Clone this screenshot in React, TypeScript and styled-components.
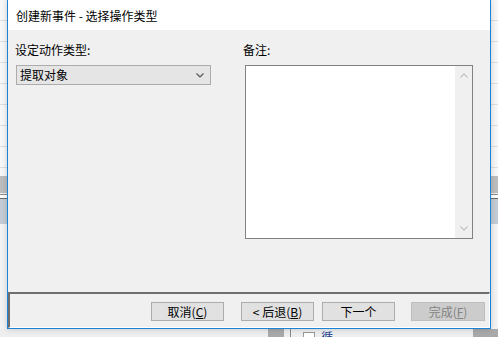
import React from "react";
import styled, { createGlobalStyle } from "styled-components";

const Global = createGlobalStyle`
  html, body { margin: 0; padding: 0; }
  body {
    width: 498px; height: 337px; overflow: hidden;
    font-family: "Noto Sans CJK SC", "Microsoft YaHei", sans-serif;
    font-size: 12px; color: #000;
  }
`;

const Desktop = styled.div`
  position: relative;
  width: 498px;
  height: 337px;
  display: flex;
  flex-direction: column;
  background: #f2f2f2;
  overflow: hidden;
`;

const BgRows = styled.div`
  height: 176px;
  background: repeating-linear-gradient(
    to bottom,
    #f7f7f7 0px,
    #f7f7f7 20px,
    #dedede 20px,
    #dedede 21px
  );
`;

const BgBand = styled.div<{ $h: number; $c: string }>`
  height: ${(p) => p.$h}px;
  background: ${(p) => p.$c};
`;

const BgRest = styled.div`
  flex: 1;
  background: #f3f3f3;
`;

const BottomStrip = styled.div`
  height: 8px;
  display: flex;
  align-items: flex-start;
  background: #eeeeee;
  padding-left: 268px;
  overflow: hidden;
`;

const GreyBlock = styled.div<{ $w: number; $ml: number }>`
  width: ${(p) => p.$w}px;
  height: 8px;
  margin-left: ${(p) => p.$ml}px;
  background: #a9a9a9;
`;

const VLine = styled.div<{ $ml: number }>`
  width: 1px;
  height: 8px;
  margin-left: ${(p) => p.$ml}px;
  background: #8a8a8a;
`;

const MiniCheck = styled.div`
  width: 11px;
  height: 8px;
  margin-left: 12px;
  margin-top: 3px;
  border: 1px solid #9a9a9a;
  border-bottom: none;
  background: #fff;
`;

const MiniText = styled.span`
  margin-left: 6px;
  margin-top: 1px;
  font-size: 12px;
  line-height: 14px;
  color: #1b3f8f;
`;

const Window = styled.div`
  position: absolute;
  left: 7px;
  top: 0;
  width: 482px;
  height: 328px;
  border: 1px solid #1883d7;
  border-top: none;
  display: flex;
  flex-direction: column;
  box-shadow: 0 0 6px rgba(0, 0, 0, 0.18);
`;

const TitleBar = styled.div`
  height: 30px;
  background: #ffffff;
  display: flex;
  align-items: center;
  padding-left: 8px;
  font-size: 12px;
  color: #000;
`;

const Body = styled.div`
  flex: 1;
  background: #f0f0f0;
  display: flex;
  flex-direction: column;
`;

const Content = styled.div`
  flex: 1;
  display: grid;
  grid-template-columns: 228px 228px;
  padding: 12px 0 0 8px;
  align-content: start;
`;

const Column = styled.div`
  display: flex;
  flex-direction: column;
  gap: 7px;
`;

const Label = styled.div`
  height: 16px;
  line-height: 16px;
  font-size: 12px;
  margin-left: -1px;
`;

const Select = styled.div`
  width: 184px;
  height: 18px;
  border: 1px solid #acacac;
  background: #e5e5e5;
  display: flex;
  align-items: center;
  justify-content: space-between;
  padding: 0 6px 0 3px;
  box-sizing: content-box;
`;

const SelectText = styled.span`
  font-size: 12px;
  line-height: 16px;
`;

const TextBox = styled.div`
  width: 226px;
  height: 172px;
  border: 1px solid #828282;
  background: #ffffff;
  display: flex;
  justify-content: flex-end;
  margin-left: 1px;
`;

const ScrollBar = styled.div`
  width: 17px;
  background: #f0f0f0;
  display: flex;
  flex-direction: column;
  align-items: center;
  justify-content: space-between;
  padding: 7px 0 7px;
`;

const Footer = styled.div`
  border-top: 2px solid #6e6e6e;
  border-left: 2px solid #6e6e6e;
  border-bottom: 1px solid #ffffff;
  border-right: 1px solid #ffffff;
  display: flex;
  justify-content: flex-end;
  align-items: flex-start;
  padding: 8px 4px 0 0;
  box-sizing: content-box;
  height: 25px;
`;

const Button = styled.div<{ $ml?: number; $disabled?: boolean; $w?: number }>`
  width: ${(p) => p.$w ?? 71}px;
  height: 17px;
  margin-left: ${(p) => p.$ml ?? 0}px;
  border: 1px solid ${(p) => (p.$disabled ? "#bfbfbf" : "#adadad")};
  background: ${(p) => (p.$disabled ? "#cccccc" : "#e1e1e1")};
  color: ${(p) => (p.$disabled ? "#838383" : "#000")};
  display: flex;
  align-items: center;
  justify-content: center;
  font-size: 12px;
  line-height: 16px;
  white-space: nowrap;
  u { text-decoration: underline; text-underline-offset: 1px; }
`;

const Chevron: React.FC<{ dir: "up" | "down"; color: string }> = ({ dir, color }) => (
  <svg width="8" height="5" viewBox="0 0 8 5">
    <polyline
      points={dir === "down" ? "0.5,0.5 4,4 7.5,0.5" : "0.5,4.5 4,1 7.5,4.5"}
      fill="none"
      stroke={color}
      strokeWidth="1.2"
    />
  </svg>
);

export default function App() {
  return (
    <>
      <Global />
      <Desktop>
        <BgRows />
        <BgBand $h={17} $c="#bdbdbd" />
        <BgBand $h={1} $c="#f0f0f0" />
        <BgBand $h={1} $c="#8c8c8c" />
        <BgBand $h={3} $c="#ffffff" />
        <BgBand $h={1} $c="#6a6a6a" />
        <BgBand $h={25} $c="#c3ccd6" />
        <BgRest />
        <BottomStrip>
          <GreyBlock $w={16} $ml={0} />
          <VLine $ml={6} />
          <MiniCheck />
          <MiniText>循环</MiniText>
          <GreyBlock $w={26} $ml={128} />
        </BottomStrip>

        <Window>
          <TitleBar>创建新事件 - 选择操作类型</TitleBar>
          <Body>
            <Content>
              <Column>
                <Label>设定动作类型:</Label>
                <Select>
                  <SelectText>提取对象</SelectText>
                  <Chevron dir="down" color="#555555" />
                </Select>
              </Column>
              <Column>
                <Label>备注:</Label>
                <TextBox>
                  <ScrollBar>
                    <Chevron dir="up" color="#c2c2c2" />
                    <Chevron dir="down" color="#c2c2c2" />
                  </ScrollBar>
                </TextBox>
              </Column>
            </Content>
            <Footer>
              <Button>
                取消(<u>C</u>)
              </Button>
              <Button $ml={17}>
                {"<"} 后退(<u>B</u>)
              </Button>
              <Button $ml={8}>下一个</Button>
              <Button $ml={16} $w={72} $disabled>
                完成(<u>F</u>)
              </Button>
            </Footer>
          </Body>
        </Window>
      </Desktop>
    </>
  );
}
